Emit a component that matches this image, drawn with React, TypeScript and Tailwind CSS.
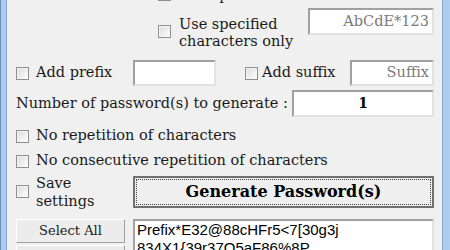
import React from "react";

const serif = "font-['DejaVu_Serif','Liberation_Serif',serif]";

const Check = () => (
  <span className="block w-[13px] h-[13px] shrink-0 border border-[#8e8f8f] bg-gradient-to-br from-[#dcdcdc] to-white shadow-[inset_1px_1px_0_#f4f4f4]" />
);

const Field = ({
  className,
  children,
}: {
  className: string;
  children?: React.ReactNode;
}) => (
  <div
    className={`flex items-center shrink-0 bg-white border-2 border-t-[#a0a0a0] border-l-[#a0a0a0] border-b-[#e3e3e3] border-r-[#e3e3e3] ${className}`}
  >
    {children}
  </div>
);

export default function App() {
  return (
    <div className={`flex w-[450px] h-[250px] overflow-hidden bg-[#f0f0f0] text-[14.5px] text-[#1a1a1a] whitespace-nowrap ${serif}`}>
      <div className="w-[7px] h-full flex shrink-0">
        <div className="w-px bg-[#6d8fb8]" />
        <div className="w-[5px] bg-[#aecbf0]" />
        <div className="w-px bg-[#8aa8cf]" />
      </div>

      <div className="flex-1 flex flex-col pl-[9px] pr-[8px]">
        {/* cut-off row */}
        <div className="h-[8px] -mt-[14px] mb-[6px] flex items-start pl-[142px] leading-[18px]">
          <span className="mt-[2px] mr-[8px]">
            <Check />
          </span>
          <span>Use special characters</span>
        </div>

        {/* specified characters */}
        <div className="flex items-start h-[42px] pl-[142px] mt-[10px]">
          <div className="mt-[15px] mr-[8px]">
            <Check />
          </div>
          <div className="leading-[17px] w-[129px] mt-[6px]">
            Use specified
            <br />
            characters only
          </div>
          <Field className="w-[126px] h-[27px] -mt-[2px] justify-end pr-[3px] text-[#7a7a7a]">
            AbCdE*123
          </Field>
        </div>

        {/* prefix / suffix */}
        <div className="flex items-center h-[26px] mt-[10px]">
          <Check />
          <span className="ml-[7px] w-[97px] shrink-0">Add prefix</span>
          <Field className="w-[83px] h-[26px]" />
          <div className="ml-[29px]">
            <Check />
          </div>
          <span className="ml-[4px] w-[88px] shrink-0">Add suffix</span>
          <Field className="w-[84px] h-[26px] justify-end pr-[3px] text-[#7a7a7a]">
            Suffix
          </Field>
        </div>

        {/* number */}
        <div className="flex items-center h-[27px] mt-[4px]">
          <span className="w-[276px] shrink-0">Number of password(s) to generate :</span>
          <Field className="w-[142px] h-[27px] justify-center font-bold text-[14px] text-black">
            1
          </Field>
        </div>

        <div className="flex items-center h-[16px] mt-[11px]">
          <Check />
          <span className="ml-[7px]">No repetition of characters</span>
        </div>

        <div className="flex items-center h-[16px] mt-[9px]">
          <Check />
          <span className="ml-[7px]">No consecutive repetition of characters</span>
        </div>

        <div className="flex items-center h-[33px] mt-[6px]">
          <Check />
          <span className="ml-[7px] w-[97px] shrink-0 leading-[18px]">
            Save
            <br />
            settings
          </span>
          <button className="w-[301px] h-[32px] shrink-0 border-2 border-[#707070] bg-[#efefef] p-[1px]">
            <div className="w-full h-full border border-dotted border-[#444] flex items-center justify-center font-bold text-[16px] text-black">
              Generate Password(s)
            </div>
          </button>
        </div>

        <div className="flex items-start mt-[11px]">
          <div className="flex flex-col w-[109px] shrink-0 gap-[2px]">
            <button className="h-[24px] border border-t-white border-l-white border-b-[#a0a0a0] border-r-[#a0a0a0] bg-[#ececec] text-[13px]">
              Select All
            </button>
            <button className="h-[24px] border border-t-white border-l-white border-b-[#a0a0a0] border-r-[#a0a0a0] bg-[#ececec] text-[13px]">
              Copy
            </button>
          </div>
          <div className="ml-[8px] w-[301px] h-[40px] shrink-0 bg-white border-2 border-t-[#a0a0a0] border-l-[#a0a0a0] border-b-[#e3e3e3] border-r-[#e3e3e3] pl-[2px] font-['Liberation_Sans',sans-serif] text-[15px] leading-[18px] text-black">
            Prefix*E32@88cHFr5&lt;7[30g3j
            <br />
            834X1{"{"}39r37O5aF86%8P
          </div>
        </div>
      </div>

      <div className="w-[8px] h-full flex shrink-0">
        <div className="w-px bg-[#8aa8cf]" />
        <div className="w-[7px] bg-[#aecbf0]" />
      </div>
    </div>
  );
}
